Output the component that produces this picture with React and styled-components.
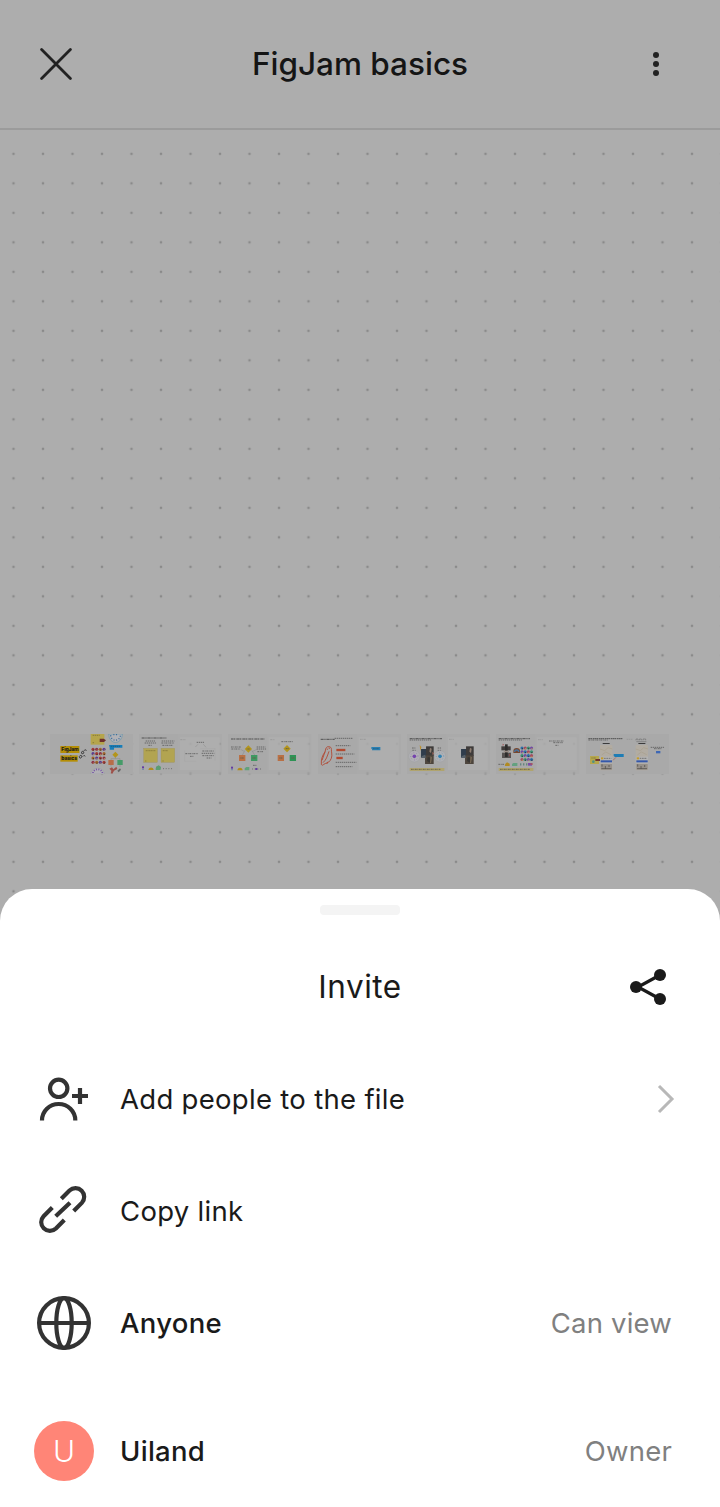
import React from 'react'
import styled, { createGlobalStyle } from 'styled-components'

const GlobalStyle = createGlobalStyle`
    * {
        box-sizing: border-box;
    }

    body {
        margin: 0;
        background: #adadad;
        font-family: Inter, 'Liberation Sans', sans-serif;
    }
`

const Screen = styled.div`
    display: flex;
    flex-direction: column;
    width: 720px;
    height: 1507px;
    overflow: hidden;
    background-color: #adadad;
`

const Header = styled.header`
    display: grid;
    grid-template-columns: 128px 1fr 128px;
    align-items: center;
    flex: none;
    height: 130px;
    border-bottom: 2px solid #9b9b9b;
    background: #adadad;
`

const IconSlot = styled.div`
    display: flex;
    justify-content: ${props => (props.$end ? 'flex-end' : 'flex-start')};
    padding-left: ${props => (props.$end ? 0 : 40)}px;
    padding-right: ${props => props.$inset || 0}px;
`

const Title = styled.h1`
    margin: 0;
    font-size: 31.5px;
    line-height: 40px;
    font-weight: ${props => props.$weight || 400};
    letter-spacing: ${props => props.$spacing || 0}px;
    text-align: center;
    white-space: nowrap;
    color: ${props => props.$color || '#1a1a1a'};
`

const Board = styled.main`
    flex: none;
    height: 799px;
    padding: 604px 0 0 49.5px;
    background-image: radial-gradient(
        circle at 14.75px 14.75px,
        #8a8a8a 0.9px,
        rgba(138, 138, 138, 0) 1.7px
    );
    background-size: 29.5px 29.5px;
    background-position: -1.25px 9.1px;
`

const Frames = styled.div`
    display: flex;
    gap: 6px;
`

const Frame = styled.svg`
    flex: none;
    width: 83.4px;
    height: 40px;
    display: block;
    font-family: Inter, 'Liberation Sans', sans-serif;
`

/* pulled up so its round corners sit on the board */
const Sheet = styled.section`
    position: relative;
    flex: 1;
    display: flex;
    flex-direction: column;
    margin-top: -40px;
    background: #fff;
    border-radius: 32px 32px 0 0;
`

const Handle = styled.div`
    flex: none;
    align-self: center;
    width: 80px;
    height: 10px;
    margin: 16px 0;
    border-radius: 4px;
    background: #f4f4f4;
`

const SheetHeader = styled.div`
    display: grid;
    grid-template-columns: 128px 1fr 128px;
    align-items: center;
    flex: none;
    height: 112px;
`

const Row = styled.div`
    display: flex;
    align-items: center;
    flex: none;
    height: 112px;
    margin-top: ${props => props.$gap || 0}px;
    padding: 0 48px 0 34px;
`

const RowIcon = styled.svg`
    flex: none;
    width: 60px;
    height: 60px;
    margin-right: 26px;
    fill: none;
    stroke: #333;
    stroke-width: 4.2;
`

const Avatar = styled.div`
    display: flex;
    align-items: center;
    justify-content: center;
    flex: none;
    width: 60px;
    height: 60px;
    margin-right: 26px;
    border-radius: 50%;
    background: #ff8577;
    color: #fff;
    font-size: 30px;
    font-weight: 300;
`

const Label = styled.span`
    flex: 1;
    font-size: 27.5px;
    line-height: 36px;
    font-weight: ${props => (props.$strong ? 500 : 400)};
    letter-spacing: 0.3px;
    color: #1a1a1a;
`

const Role = styled.span`
    font-size: 27.5px;
    line-height: 36px;
    letter-spacing: 0.2px;
    color: #808080;
`

const Chevron = styled.svg`
    flex: none;
    width: 24px;
    height: 32px;
    margin-right: -8px;
    fill: none;
    stroke: #b8b8b8;
    stroke-width: 3;
`

/* illegible copy on the miniatures */
const Scribble = ({ x, y, w, bold, color = '#2c2c2c' }) => (
    <path
        d={`M${x} ${y}h${w}`}
        stroke={color}
        strokeWidth={bold ? 2.6 : 2.4}
        strokeDasharray={bold ? '7 1 4 2 3 1' : '5 2 3 2'}
        opacity={bold ? 0.8 : 0.65}
    />
)

const Backdrop = ({ panel }) => (
    <>
        <rect width="250" height="120" fill="#a9a9a9" fillOpacity={panel ? 0.6 : 1} />
        {panel && <rect x="0" y="0" width="118" height="118" fill="#a9a9a9" />}
        {panel && (
            <rect x={panel} y="10" width={242 - panel} height="98" fill="#b0b0b0" fillOpacity="0.6" />
        )}
    </>
)

const Diamond = ({ x, y, r = 11 }) => (
    <path d={`M${x} ${y - r}l${r} ${r}l${-r} ${r}l${-r} ${-r}z`} fill="#b3951c" />
)

const STICKERS = ['#a33a35', '#5a3b91', '#a3632c', '#8c3046']
const SHAPES = ['#2d6fa8', '#7048a3', '#3b8f73', '#a34a63']

const StickerGrid = ({ x, y, cols, rows, step, colors }) =>
    Array.from({ length: cols * rows }, (_, i) => {
        const col = i % cols
        const row = Math.floor(i / cols)
        return (
            <g key={i}>
                <circle
                    cx={x + col * step}
                    cy={y + row * (step + 2)}
                    r="4.7"
                    fill={colors[(col * 3 + row) % colors.length]}
                />
                <circle
                    cx={x + col * step + 1}
                    cy={y + row * (step + 2) + 2}
                    r="1.8"
                    fill={(col + row) % 2 ? '#b6a24f' : '#343434'}
                />
            </g>
        )
    })

const VoteWheel = ({ x, y, r = 17, color }) => (
    <>
        <circle cx={x} cy={y} r={r} fill="#b1b1b4" stroke="#989ba0" />
        <circle cx={x} cy={y} r={r - 6} fill="none" stroke={color} strokeWidth="3" strokeDasharray="2 6" opacity=".5" />
        <circle cx={x} cy={y} r="5.5" fill={color} />
    </>
)

const Photos = ({ x, y }) => (
    <>
        <path d={`M${x} ${y + 8}h18v26h-18z`} fill="#303d4c" />
        <path d={`M${x + 15} ${y}h23v29h-23z`} fill="#3e3b3a" />
        <path d={`M${x + 27} ${y + 4}l5 3l-2 13l-5 -4z`} fill="#8f7e72" />
        <path d={`M${x + 12} ${y + 27}h26v26h-26z`} fill="#4d453d" />
        <path d={`M${x + 20} ${y + 32}l9 2l-3 15l-8 -5z`} fill="#383633" />
        <path d={`M${x + 28} ${y + 30}l5 3l-3 17l-3 1z`} fill="#776855" />
        <path d={`M${x + 3} ${y + 29}l9 -4l3 9h-14z`} fill="#56616a" />
    </>
)

const Palette = ({ x, y }) => (
    <>
        <rect x={x} y={y - 9} width="6" height="6" fill="#633ba2" />
        <circle cx={x + 3} cy={y} r="2" fill="#4874a8" />
        <path d={`M${x + 19} ${y + 2}c1 -10 15 -10 16 0z`} fill="#b18c1c" />
        <path d={`M${x + 41} ${y + 2}v-6l5 -4h9v10z`} fill="#62a27b" />
        <path d={`M${x + 63} ${y - 2}h27`} stroke="#555" strokeWidth="2" strokeDasharray="3 5" />
    </>
)

const PhoneMock = ({ x, y }) => (
    <>
        <rect x={x + 8} y={y - 6} width="21" height="3" fill="#3c3c3c" />
        <rect x={x} y={y} width="37" height="76" rx="2" fill="#b2aca2" />
        <path d={`M${x} ${y + 12}l14 5l10 -9l13 4M${x + 5} ${y + 30}l12 -9l16 8`} stroke="#a59a84" fill="none" strokeWidth="1.5" />
        <rect x={x} y={y + 35} width="37" height="20" fill="#b3b3b3" />
        <rect x={x + 3} y={y + 37} width="7" height="6" fill="#c39c29" />
        <path d={`M${x + 12} ${y + 40}h22`} stroke="#555" strokeWidth="2" strokeDasharray="5 2" />
        <rect x={x + 2} y={y + 46} width="34" height="6" fill="#3558aa" />
        <rect x={x + 2} y={y + 57} width="34" height="17" fill="#96908a" />
        <path d={`M${x + 6} ${y + 58}v7M${x + 16} ${y + 63}v9M${x + 27} ${y + 60}v6M${x + 4} ${y + 71}h30`} stroke="#54504c" strokeWidth="2.4" />
    </>
)

const FrameIntro = () => (
    <Frame viewBox="0 0 250 120">
        <Backdrop />
        <rect x="31" y="36" width="57" height="21" fill="#b58e05" />
        <rect x="31" y="64" width="52" height="19" fill="#b58e05" />
        <text x="34" y="52" fontSize="15" fontWeight="800" fill="#1b1b1b" textLength="52">FigJam</text>
        <text x="34" y="79" fontSize="15" fontWeight="800" fill="#1b1b1b" textLength="47">basics</text>
        <path d="M87 68l6 -5l3 6l-6 4zM94 54l5 -3l3 6l-6 3zM101 50l6 -3l2 4M98 68l4 -4l4 3" fill="none" stroke="#2c2c2c" strokeWidth="2.2" />
        <rect x="122" y="0" width="41" height="32" fill="#b5a54c" />
        <path d="M128 4h21M128 26h6" stroke="#716732" strokeWidth="2" strokeDasharray="4 2" />
        <path d="M149 14h12l7 5l-6 5h-13z" fill="#6f302d" />
        <StickerGrid x={129} y={46} cols={4} rows={4} step={11} colors={STICKERS} />
        <path d="M122 120a20 17 0 0 1 41 0z" fill="#b1b1b5" stroke="#9292a1" />
        <path d="M129 117a13 10 0 0 1 28 0" fill="none" stroke="#7553a5" strokeWidth="5" strokeDasharray="3 4" />
        <path d="M176 0a20 25 0 0 0 41 0z" fill="#b1b1b5" stroke="#6797ad" strokeWidth="2" />
        <path d="M182 4a14 14 0 0 0 29 0M190 2h13" fill="none" stroke="#376c9d" strokeWidth="4" strokeDasharray="3 5" />
        <path d="M177 33h40v8h-25v6h-13v-6z" fill="#187eb9" />
        <path d="M182 37h28" stroke="#205371" strokeDasharray="4 2" strokeWidth="2" />
        <path d="M196 69v5M183 79v-5h27v5M183 93v4M210 93v6" fill="none" stroke="#777" />
        <Diamond x={196} y={62} r={9} />
        <rect x="175" y="78" width="16" height="15" fill="#b86d49" />
        <rect x="202" y="78" width="16" height="15" fill="#459b68" />
        <path d="M178 104l8 -4l4 6l9 -8l3 7l-10 5l-5 9l-5 -1l2 -8z" fill="#9e5049" />
        <path d="M202 110l8 -7l3 4l-7 8z" fill="#666" />
    </Frame>
)

const FrameNotes = () => (
    <Frame viewBox="0 0 250 120">
        <Backdrop panel={122} />
        <Scribble x={8} y={12} w={74} bold />
        <Scribble x={20} y={21} w={28} />
        <Scribble x={17} y={27} w={34} />
        <Scribble x={28} y={34} w={12} />
        <Scribble x={68} y={21} w={38} />
        <Scribble x={67} y={27} w={38} />
        <Scribble x={70} y={34} w={32} />
        <rect x="14" y="43" width="41" height="42" fill="#b2a451" stroke="#9b9057" />
        <rect x="66" y="43" width="41" height="42" fill="#b2a451" stroke="#9b9057" />
        <path d="M20 50h29M71 50h16M18 81h5M70 81h5" stroke="#7b7037" strokeWidth="2" strokeDasharray="4 1" />
        <Palette x={9} y={106} />
        <path d="M51 107v-9l8 -4l7 5l-2 8z" fill="#5c9d72" />
        <Scribble x={124} y={17} w={15} color="#888" />
        <Scribble x={173} y={25} w={24} />
        <path d="M177 31l-8 8M193 31l8 9" stroke="#777" />
        <Scribble x={139} y={59} w={38} />
        <Scribble x={153} y={67} w={10} />
        <Scribble x={190} y={51} w={36} />
        <Scribble x={188} y={58} w={38} />
        <Scribble x={190} y={65} w={34} />
        <Scribble x={203} y={72} w={14} />
        <path d="M137 50v32h34M184 44h44v36" fill="none" stroke="#a2a2a2" />
    </Frame>
)

const FrameFlow = () => (
    <Frame viewBox="0 0 250 120">
        <Backdrop panel={121} />
        <Scribble x={9} y={15} w={100} bold />
        <Scribble x={9} y={39} w={30} />
        <Scribble x={10} y={45} w={26} />
        <Scribble x={86} y={39} w={26} />
        <Scribble x={86} y={45} w={28} />
        <Scribble x={88} y={53} w={18} />
        <path d="M51 49l-8 14M71 49l9 14M38 46l10 6M86 46l-12 6" stroke="#777" />
        <Diamond x={61} y={45} />
        <path d="M56 45h10" stroke="#555" strokeWidth="2" strokeDasharray="3 1" />
        <rect x="33" y="63" width="19" height="18" fill="#b97045" />
        <rect x="69" y="63" width="19" height="18" fill="#3e9962" />
        <path d="M37 72h11M73 72h11" stroke="#665f49" strokeWidth="3" strokeDasharray="4 1" />
        <Palette x={9} y={107} />
        <Scribble x={75} y={94} w={12} />
        <rect x="82" y="102" width="6" height="6" fill="#633ba2" />
        <Scribble x={127} y={17} w={13} color="#888" />
        <Scribble x={160} y={23} w={36} />
        <Diamond x={177} y={44} />
        <rect x="149" y="63" width="19" height="18" fill="#b97045" />
        <rect x="185" y="63" width="19" height="18" fill="#2e9355" />
        <path d="M173 44h9M154 72h9M190 72h9" stroke="#665f49" strokeWidth="3" strokeDasharray="4 1" />
    </Frame>
)

const FrameBird = () => (
    <Frame viewBox="0 0 250 120">
        <Backdrop panel={121} />
        <Scribble x={8} y={16} w={42} bold />
        <Scribble x={50} y={13} w={54} />
        <path
            d="M10 91c-1 -14 2 -26 11 -37l2 -9c2 -8 10 -9 15 -5c4 4 1 9 3 17c2 12 -2 22 -10 28c-6 3 -10 3 -14 6c-1 3 -6 4 -7 0zM15 86c10 -9 12 -18 18 -34M21 53l-9 26M26 45l4 1M33 40l1 5M30 83l-4 7"
            fill="none"
            stroke="#b04c38"
            strokeWidth="2.8"
        />
        <Scribble x={53} y={35} w={44} />
        <path d="M55 48h27" stroke="#b24a30" strokeWidth="7" />
        <Scribble x={53} y={60} w={56} />
        <path d="M55 72h19" stroke="#b24a30" strokeWidth="7" />
        <Scribble x={53} y={85} w={62} />
        <Scribble x={53} y={98} w={50} />
        <Scribble x={126} y={16} w={17} color="#888" />
        <path d="M160 39h27v10h-25v-4h-2z" fill="#2b80b2" />
        <path d="M165 44h18" stroke="#245272" strokeWidth="2" strokeDasharray="3 1" />
    </Frame>
)

const FrameVotes = () => (
    <Frame viewBox="0 0 250 120">
        <Backdrop panel={122} />
        <Scribble x={8} y={14} w={97} bold />
        <Scribble x={8} y={18} w={64} />
        <Scribble x={15} y={42} w={12} />
        <Scribble x={16} y={49} w={11} />
        <Scribble x={92} y={42} w={12} />
        <Scribble x={92} y={49} w={11} />
        <VoteWheel x={22} y={67} color="#7544ad" />
        <VoteWheel x={99} y={67} color="#2e80b2" />
        <path d="M38 33l5 6l-3 12z" fill="#ba8f2b" />
        <Photos x={42} y={37} />
        <path d="M76 54l5 4l-4 6z" fill="#ac6c61" />
        <rect x="8" y="102" width="104" height="9" fill="#b0a46e" />
        <Scribble x={12} y={106} w={88} />
        <Scribble x={126} y={16} w={14} color="#888" />
        <Photos x={162} y={37} />
    </Frame>
)

const FrameStickers = () => (
    <Frame viewBox="0 0 250 120">
        <Backdrop panel={121} />
        <Scribble x={8} y={14} w={94} bold />
        <Scribble x={8} y={18} w={72} />
        <path d="M16 37h28v12h-28z" fill="#403c3b" />
        <path d="M18 56h27v16h-27z" fill="#555150" />
        <path d="M27 31h8v38h-8z" fill="#2d2c2c" />
        <path d="M20 29l4 3l-4 3zM39 60l5 2l-4 4z" fill="#a84b4b" />
        <path d="M23 50h16v5h-16z" fill="#978b84" />
        <path d="M52 57v-6a10 9 0 0 1 20 0v6z" fill="#77472f" />
        <path d="M56 54a6 6 0 0 1 12 0" fill="none" stroke="#4573a1" strokeWidth="4" />
        <StickerGrid x={78} y={42} cols={4} rows={4} step={9.5} colors={SHAPES} />
        <Scribble x={7} y={91} w={17} />
        <path d="M27 96v-5l6 -6l8 4v7z" fill="#b18b22" />
        <path d="M48 96v-6l4 -3h12v9z" fill="#64a180" />
        <path d="M72 91h22" stroke="#63857c" strokeWidth="7" strokeDasharray="4 5" />
        <path d="M96 87h12v8h-12z" fill="#7b4aa8" />
        <path d="M103 90h7" stroke="#a95562" strokeWidth="5" />
        <rect x="8" y="102" width="104" height="9" fill="#b0a46e" />
        <Scribble x={12} y={106} w={90} />
        <Scribble x={126} y={17} w={14} color="#888" />
        <Scribble x={159} y={21} w={44} />
        <Scribble x={172} y={26} w={28} />
        <Scribble x={178} y={34} w={9} />
    </Frame>
)

const FrameMockups = () => (
    <Frame viewBox="0 0 250 120">
        <Backdrop />
        <Scribble x={7} y={14} w={102} bold />
        <Scribble x={7} y={18} w={60} />
        <PhoneMock x={42} y={33} />
        <path d="M12 66h27v24h-27z" fill="#b6a74d" />
        <path d="M16 72h14" stroke="#6d6435" strokeWidth="2" strokeDasharray="3 1" />
        <path d="M28 75h14v6h-14z" fill="#6e332e" />
        <circle cx="22" cy="83" r="4" fill="#4f9184" />
        <path d="M83 60h30v9h-28v-3h-2z" fill="#1e7db5" />
        <path d="M90 70l-9 9" stroke="#a9564c" strokeWidth="2" />
        <Scribble x={122} y={16} w={18} color="#888" />
        <path d="M150 19v-4h6v4M160 19v-4h6v4M171 19v-4h8v4M151 23h30" fill="none" stroke="#606060" strokeWidth="1.5" />
        <PhoneMock x={149} y={33} />
        <Scribble x={194} y={40} w={40} />
        <Scribble x={204} y={44} w={22} />
        <path d="M210 51h13v7h-13z" fill="#3d67b5" />
    </Frame>
)

const CloseIcon = () => (
    <svg width="32" height="32" viewBox="0 0 32 32" stroke="#222" strokeWidth="2.8" strokeLinecap="round">
        <path d="M1.6 1.6l28.8 28.8M30.4 1.6l-28.8 28.8" />
    </svg>
)

const MoreIcon = () => (
    <svg width="32" height="32" viewBox="0 0 32 32" fill="#222">
        <circle cx="16" cy="7" r="3" />
        <circle cx="16" cy="16" r="3" />
        <circle cx="16" cy="25" r="3" />
    </svg>
)

const ShareIcon = () => (
    <svg width="40" height="40" viewBox="0 0 40 40" fill="#1a1a1a">
        <path d="M32 8L10 20l22 12" fill="none" stroke="#1a1a1a" strokeWidth="3.2" />
        <circle cx="32" cy="8" r="6" />
        <circle cx="8" cy="20" r="6" />
        <circle cx="32" cy="32" r="6" />
    </svg>
)

const App = () => {
    return (
        <Screen>
            <GlobalStyle />
            <Header>
                <IconSlot>
                    <CloseIcon />
                </IconSlot>
                <Title $weight={500} $color="#151515">FigJam basics</Title>
                <IconSlot $end $inset={48}>
                    <MoreIcon />
                </IconSlot>
            </Header>
            <Board>
                <Frames>
                    <FrameIntro />
                    <FrameNotes />
                    <FrameFlow />
                    <FrameBird />
                    <FrameVotes />
                    <FrameStickers />
                    <FrameMockups />
                </Frames>
            </Board>
            <Sheet>
                <Handle />
                <SheetHeader>
                    <span />
                    <Title as="h2" $spacing={0.5}>Invite</Title>
                    <IconSlot $end $inset={52}>
                        <ShareIcon />
                    </IconSlot>
                </SheetHeader>
                <Row>
                    <RowIcon viewBox="0 0 60 60">
                        <circle cx="24.7" cy="19.3" r="8.7" />
                        <path d="M8 51.4a16.65 16.4 0 0 1 33.3 0M38 27h16M46 19v16" />
                    </RowIcon>
                    <Label>Add people to the file</Label>
                    <Chevron viewBox="0 0 24 32">
                        <path d="M3 3l13 13l-13 13" />
                    </Chevron>
                </Row>
                <Row>
                    <RowIcon viewBox="0 0 60 60">
                        <path d="M27.3 17.8l8.2 -8.2a8.7 8.7 0 0 1 12.3 12.3l-8.1 8.1M18.3 26.5l-8.7 8.7a8.7 8.7 0 0 0 12.3 12.3l8.4 -8.4M21.7 35.3l14.3 -13.6" />
                    </RowIcon>
                    <Label>Copy link</Label>
                </Row>
                <Row>
                    <RowIcon viewBox="0 0 60 60">
                        <circle cx="30" cy="30" r="24.9" />
                        <ellipse cx="30" cy="30" rx="7.7" ry="24.9" />
                        <path d="M5 30h50" />
                    </RowIcon>
                    <Label $strong>Anyone</Label>
                    <Role>Can view</Role>
                </Row>
                <Row $gap={16}>
                    <Avatar>U</Avatar>
                    <Label $strong>Uiland</Label>
                    <Role>Owner</Role>
                </Row>
            </Sheet>
        </Screen>
    )
}

export default App
